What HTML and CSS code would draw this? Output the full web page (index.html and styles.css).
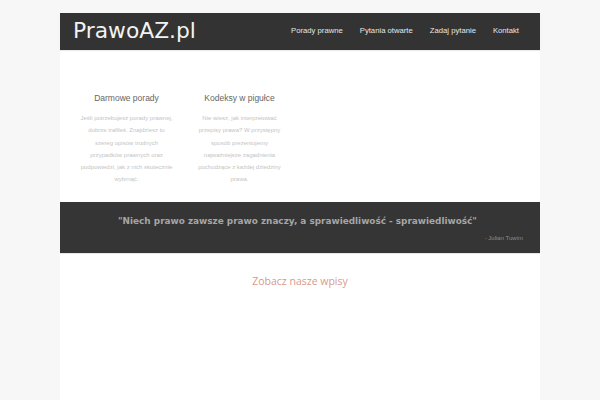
FILE: index.html
```html
<!DOCTYPE html>
<html lang="pl">
<head>
<meta charset="utf-8">
<title>PrawoAZ.pl</title>
<link rel="stylesheet" href="styles.css">
</head>
<body>
<div class="page">
  <header class="header">
    <div class="logo">PrawoAZ.pl</div>
    <nav class="nav">
      <a href="#">Porady prawne</a>
      <a href="#">Pytania otwarte</a>
      <a href="#">Zadaj pytanie</a>
      <a href="#">Kontakt</a>
    </nav>
  </header>
  <section class="features">
    <div class="feature">
      <h3>Darmowe porady</h3>
      <p>Jeśli potrzebujesz porady prawnej,<br>dobrze trafiłeś. Znajdziesz tu<br>szereg opisów trudnych<br>przypadków prawnych oraz<br>podpowiedzi, jak z nich skutecznie<br>wybrnąć.</p>
    </div>
    <div class="feature">
      <h3>Kodeksy w pigułce</h3>
      <p>Nie wiesz, jak interpretować<br>przepisy prawa? W przystępny<br>sposób prezentujemy<br>najważniejsze zagadnienia<br>pochodzące z każdej dziedziny<br>prawa.</p>
    </div>
  </section>
  <section class="quote">
    <p class="quote-text">"Niech prawo zawsze prawo znaczy, a sprawiedliwość - sprawiedliwość"</p>
    <p class="quote-author">- Julian Tuwim</p>
  </section>
  <section class="posts">
    <h2>Zobacz nasze wpisy</h2>
  </section>
</div>
</body>
</html>
```
FILE: styles.css
```css
html, body {
  margin: 0;
  padding: 0;
}
body {
  background: #f7f7f7;
  font-family: "Liberation Sans", Arial, sans-serif;
}
.page {
  width: 480px;
  margin: 13px auto 0;
  background: #ffffff;
  min-height: 387px;
}
.header {
  background: #333333;
  height: 37px;
  display: flex;
  align-items: center;
  justify-content: space-between;
  padding: 0 21px 0 13px;
  box-shadow: 0 1px 1px rgba(0,0,0,0.08);
}
.logo {
  font-family: "DejaVu Sans", sans-serif;
  color: #f2f2f2;
  font-size: 21.8px;
  line-height: 1;
  margin-top: -2px;
}
.nav {
  display: flex;
  gap: 17px;
  margin-top: -2px;
}
.nav a {
  color: #e6e6e6;
  text-decoration: none;
  font-size: 7.7px;
}
.features {
  display: flex;
  padding: 42px 0 0 10px;
  height: 110px;
}
.feature {
  width: 113px;
  text-align: center;
}
.feature h3 {
  margin: 0 0 8px;
  font-weight: normal;
  font-size: 8.5px;
  color: #666666;
  line-height: 12px;
}
.feature p {
  margin: 0;
  font-size: 6px;
  line-height: 12.3px;
  color: #c4c4c4;
}
.quote {
  background: #353535;
  height: 52px;
  padding: 0 17px 0 12px;
  box-sizing: border-box;
  border-bottom: 1px solid #e6e6e6;
}
.quote-text {
  margin: 0;
  padding-top: 12px;
  text-align: center;
  font-family: "DejaVu Sans", sans-serif;
  font-weight: bold;
  font-size: 8.9px;
  color: #a6a6a6;
  line-height: 14px;
}
.quote-author {
  margin: 5px 0 0;
  text-align: right;
  font-size: 6px;
  color: #8c8c8c;
  line-height: 10px;
}
.posts {
  text-align: center;
  padding-top: 20px;
}
.posts h2 {
  margin: 0;
  font-family: "Open Sans", sans-serif;
  font-weight: normal;
  font-size: 10.5px;
  color: #d9998b;
  line-height: 14px;
}
```
